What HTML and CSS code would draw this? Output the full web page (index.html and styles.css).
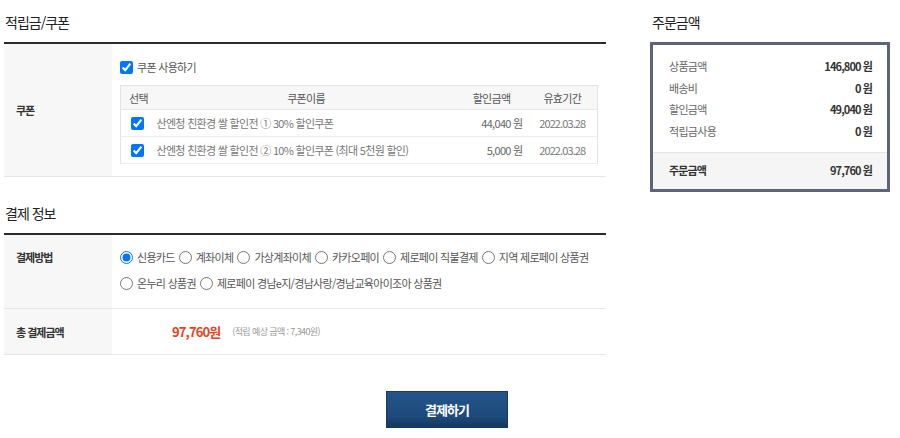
FILE: index.html
```html
<!DOCTYPE html>
<html lang="ko">
<head>
    <meta charset="UTF-8">
    <meta name="viewport" content="width=device-width, initial-scale=1.0">
    <title>주문결제</title>
    <link rel="stylesheet" href="styles.css">
</head>
<body>
    <div class="page">
        <div class="main">
            <!-- 적립금/쿠폰 -->
            <h3 class="sec-title">적립금/쿠폰</h3>
            <div class="form-table">
                <div class="form-row">
                    <div class="form-label mid">쿠폰</div>
                    <div class="form-body coupon-body">
                        <label class="use-coupon"><input type="checkbox" checked> 쿠폰 사용하기</label>
                        <table class="coupon-table">
                            <colgroup>
                                <col class="c-sel"><col><col class="c-amt"><col class="c-date">
                            </colgroup>
                            <thead>
                                <tr>
                                    <th class="th-sel">선택</th>
                                    <th>쿠폰이름</th>
                                    <th>할인금액</th>
                                    <th>유효기간</th>
                                </tr>
                            </thead>
                            <tbody>
                                <tr>
                                    <td class="td-sel"><input type="checkbox" checked></td>
                                    <td class="td-name">산엔청 친환경 쌀 할인전 ① 30% 할인쿠폰</td>
                                    <td class="td-amt">44,040 원</td>
                                    <td class="td-date">2022.03.28</td>
                                </tr>
                                <tr>
                                    <td class="td-sel"><input type="checkbox" checked></td>
                                    <td class="td-name">산엔청 친환경 쌀 할인전 ② 10% 할인쿠폰 (최대 5천원 할인)</td>
                                    <td class="td-amt">5,000 원</td>
                                    <td class="td-date">2022.03.28</td>
                                </tr>
                            </tbody>
                        </table>
                    </div>
                </div>
            </div>

            <!-- 결제 정보 -->
            <h3 class="sec-title pay-title">결제 정보</h3>
            <div class="form-table">
                <div class="form-row">
                    <div class="form-label top">결제방법</div>
                    <div class="form-body pay-methods">
                        <label class="radio"><input type="radio" name="pay" checked>신용카드</label>
                        <label class="radio"><input type="radio" name="pay">계좌이체</label>
                        <label class="radio"><input type="radio" name="pay">가상계좌이체</label>
                        <label class="radio"><input type="radio" name="pay">카카오페이</label>
                        <label class="radio"><input type="radio" name="pay">제로페이 직불결제</label>
                        <label class="radio"><input type="radio" name="pay">지역 제로페이 상품권</label>
                        <label class="radio"><input type="radio" name="pay">온누리 상품권</label>
                        <label class="radio"><input type="radio" name="pay">제로페이 경남e지/경남사랑/경남교육아이조아 상품권</label>
                    </div>
                </div>
                <div class="form-row total-row">
                    <div class="form-label mid">총 결제금액</div>
                    <div class="form-body total-body">
                        <span class="total-price">97,760원</span>
                        <span class="total-note">(적립 예상 금액 : 7,340원)</span>
                    </div>
                </div>
            </div>

            <div class="btn-area">
                <button class="btn-pay" type="button">결제하기</button>
            </div>
        </div>

        <!-- 주문금액 -->
        <div class="side">
            <h3 class="sec-title side-title">주문금액</h3>
            <div class="summary">
                <ul class="sum-list">
                    <li><span>상품금액</span><strong>146,800 원</strong></li>
                    <li><span>배송비</span><strong>0 원</strong></li>
                    <li><span>할인금액</span><strong>49,040 원</strong></li>
                    <li><span>적립금사용</span><strong>0 원</strong></li>
                </ul>
                <div class="sum-total"><strong>주문금액</strong><strong>97,760 원</strong></div>
            </div>
        </div>
    </div>
</body>
</html>
```

FILE: styles.css
```css
/* General */
* {
    box-sizing: border-box;
}

body {
    margin: 0;
    background: #fff;
    color: #333;
    font-family: "Noto Sans CJK KR", "Noto Sans", sans-serif;
    font-size: 11px;
    letter-spacing: -0.7px;
}

.page {
    display: flex;
    gap: 44px;
    padding-left: 4px;
}

.main {
    width: 602px;
}

.side {
    width: 240px;
}

/* Section titles */
.sec-title {
    margin: 0;
    padding: 12px 0 10px 1px;
    font-size: 14px;
    font-weight: normal;
    line-height: 20px;
    letter-spacing: -1px;
    color: #222;
}

.pay-title {
    margin-top: 14px;
}

.side-title {
    padding-left: 2px;
}

/* Form table */
.form-table {
    border-top: 2px solid #2b2b2b;
}

.form-row {
    display: flex;
    border-bottom: 1px solid #e6e6e6;
}

.form-label {
    width: 108px;
    flex-shrink: 0;
    background: #f7f7f7;
    padding-left: 12px;
    color: #333;
    font-weight: bold;
    line-height: 14px;
    letter-spacing: -1px;
}

.form-label.mid {
    display: flex;
    align-items: center;
}

.form-label.top {
    padding-top: 15px;
}

.form-body {
    flex: 1;
    padding-left: 8px;
}

/* Coupon */
.coupon-body {
    padding: 15px 8px 12px 8px;
}

.use-coupon {
    display: flex;
    align-items: center;
    height: 16px;
    color: #555;
    gap: 4px;
}

.use-coupon input,
.td-sel input {
    width: 13px;
    height: 13px;
    margin: 0;
}

.coupon-table {
    width: 100%;
    margin-top: 10px;
    border-collapse: collapse;
    border: 1px solid #e3e3e3;
    color: #777;
}

.c-sel { width: 36px; }
.c-amt { width: 72px; }
.c-date { width: 70px; }

.coupon-table th {
    height: 24px;
    background: #f7f7f7;
    border-bottom: 1px solid #e6e6e6;
    font-weight: normal;
    color: #555;
    text-align: center;
    padding: 0;
}

.coupon-table th.th-sel {
    text-align: left;
    padding-left: 8px;
}

.coupon-table td {
    height: 27px;
    border-bottom: 1px solid #ececec;
    padding: 0;
}

.td-sel {
    padding-left: 10px !important;
    vertical-align: middle;
}

.td-sel input {
    display: block;
}

.td-amt {
    text-align: right;
    padding-right: 5px !important;
    color: #666;
}

.td-date {
    text-align: center;
    color: #777;
    letter-spacing: -0.9px;
}

/* Payment methods */
.pay-methods {
    display: flex;
    flex-wrap: wrap;
    padding: 9px 8px 12px 8px;
    color: #555;
}

.radio {
    display: flex;
    align-items: center;
    height: 26px;
    margin-right: 4px;
}

.radio input {
    width: 13px;
    height: 13px;
    margin: 0 4px 0 0;
}

.total-row {
    height: 46px;
}

.total-body {
    display: flex;
    align-items: center;
    padding-left: 60px;
}

.total-price {
    font-size: 13px;
    font-weight: bold;
    letter-spacing: -0.9px;
    color: #e6431b;
    margin-right: 12px;
}

.total-note {
    font-size: 9px;
    letter-spacing: -0.6px;
    color: #999;
}

/* Button */
.btn-area {
    display: flex;
    justify-content: center;
    margin-top: 36px;
    width: 900px;
    margin-left: -4px;
    padding-right: 6px;
}

.btn-pay {
    width: 122px;
    height: 37px;
    border: 1px solid #163a63;
    background: linear-gradient(#24558a, #1d4a7b 70%, #143860);
    color: #fff;
    font-family: inherit;
    font-size: 13px;
    font-weight: bold;
    letter-spacing: -1px;
    cursor: pointer;
}

/* Summary box */
.summary {
    border: 3px solid #5d6478;
}

.sum-list {
    list-style: none;
    margin: 0;
    padding: 11px 15px 10px 16px;
}

.sum-list li,
.sum-total {
    display: flex;
    justify-content: space-between;
    align-items: center;
    line-height: 21.5px;
}

.sum-list span {
    color: #666;
}

.sum-list strong,
.sum-total strong {
    color: #333;
    letter-spacing: -0.9px;
}

.sum-total {
    height: 37px;
    padding: 0 15px 0 16px;
    border-top: 1px solid #e3e3e8;
    background: #f5f5f5;
}
```
